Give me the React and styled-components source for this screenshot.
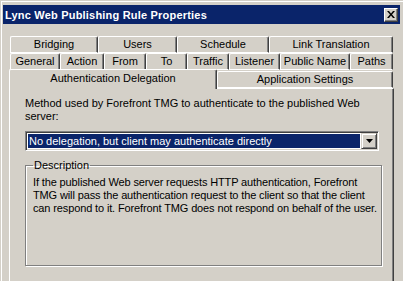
import React from 'react';
import styled, { createGlobalStyle } from 'styled-components';

const GlobalStyle = createGlobalStyle`
  html, body {
    margin: 0;
    padding: 0;
    background: #d4d0c8;
    overflow: hidden;
  }
  body {
    font-family: "Liberation Sans", Arial, sans-serif;
    font-size: 11px;
    color: #000;
  }
`;

const topRow = [
  { label: 'Bridging', width: 88 },
  { label: 'Users', width: 79 },
  { label: 'Schedule', width: 92 },
  { label: 'Link Translation', width: 124 },
];

const midRow = [
  { label: 'General', width: 50 },
  { label: 'Action', width: 44 },
  { label: 'From', width: 42 },
  { label: 'To', width: 41 },
  { label: 'Traffic', width: 42 },
  { label: 'Listener', width: 51 },
  { label: 'Public Name', width: 70 },
  { label: 'Paths', width: 43 },
];

const frontRow = [
  { label: 'Authentication Delegation', width: 208, active: true },
  { label: 'Application Settings', width: 176 },
];

const descriptionLines = [
  'If the published Web server requests HTTP authentication, Forefront',
  'TMG will pass the authentication request to the client so that the client',
  'can respond to it. Forefront TMG does not respond on behalf of the user.',
];

function PropertiesDialog() {
  return (
    <Window>
      <TitleBar>
        <TitleText>Lync Web Publishing Rule Properties</TitleText>
        <CloseButton>
          <svg width="8" height="7" viewBox="0 0 8 7">
            <path d="M0 0h2l2 2.5L6 0h2L5 3.5 8 7H6L4 4.5 2 7H0l3-3.5z" fill="#000" />
          </svg>
        </CloseButton>
      </TitleBar>
      <Body>
        {/* 탭 줄 세 개 */}
        <TabRow $indent={1}>
          {topRow.map((t) => (
            <Tab key={t.label} $width={t.width}>{t.label}</Tab>
          ))}
        </TabRow>
        <TabRow $indent={1}>
          {midRow.map((t) => (
            <Tab key={t.label} $width={t.width}>{t.label}</Tab>
          ))}
        </TabRow>
        <FrontRow>
          {frontRow.map((t) => (
            <Tab key={t.label} $width={t.width} $active={t.active}>
              {t.label}
            </Tab>
          ))}
        </FrontRow>
        <Panel>
          <Label>
            Method used by Forefront TMG to authenticate to the published Web
            server:
          </Label>
          <Combo>
            <ComboValue>No delegation, but client may authenticate directly</ComboValue>
            <ComboArrow>
              <svg width="7" height="4" viewBox="0 0 7 4">
                <path d="M0 0h7L3.5 4z" fill="#000" />
              </svg>
            </ComboArrow>
          </Combo>
          <GroupBox>
            <Legend>Description</Legend>
            {descriptionLines.map((line) => (
              <DescLine key={line}>{line}</DescLine>
            ))}
          </GroupBox>
        </Panel>
      </Body>
    </Window>
  );
}

export default function App() {
  return (
    <>
      <GlobalStyle />
      <PropertiesDialog />
    </>
  );
}

const Window = styled.div`
  width: 403px;
  height: 281px;
  box-sizing: border-box;
  padding: 5px 3px 0 3px;
  border-top: 1px solid #d4d0c8;
  border-left: 1px solid #d4d0c8;
  box-shadow: inset 1px 1px 0 #fff;
  display: flex;
  flex-direction: column;
`;

const TitleBar = styled.div`
  height: 19px;
  flex: none;
  background: #0a246a;
  display: flex;
  align-items: center;
  justify-content: space-between;
  padding: 0 2px 0 2px;
  margin-top: -1px;
  margin-left: -1px;
`;

const TitleText = styled.div`
  color: #fff;
  font-weight: bold;
  font-size: 11px;
  letter-spacing: 0.2px;
`;

const CloseButton = styled.div`
  width: 14px;
  height: 14px;
  box-sizing: border-box;
  background: #d4d0c8;
  border-top: 1px solid #fff;
  border-left: 1px solid #fff;
  border-right: 1px solid #404040;
  border-bottom: 1px solid #404040;
  box-shadow: inset -1px -1px 0 #808080;
  display: flex;
  align-items: center;
  justify-content: center;
  padding: 0 1px 1px 0;
`;

const Body = styled.div`
  flex: 1;
  padding: 12px 0 0 5px;
  display: flex;
  flex-direction: column;
`;

const TabRow = styled.div`
  display: flex;
  height: 17px;
  padding-left: ${(p) => p.$indent}px;
`;

const FrontRow = styled.div`
  display: flex;
  align-items: flex-end;
  height: 18px;
  position: relative;
  z-index: 1;
`;

const Tab = styled.div`
  width: ${(p) => p.$width}px;
  height: ${(p) => (p.$active ? 20 : 17)}px;
  flex: none;
  box-sizing: border-box;
  background: #d4d0c8;
  border-top: 1px solid #fff;
  border-left: 1px solid #fff;
  border-right: 1px solid #404040;
  box-shadow: inset -1px 0 0 #808080;
  border-radius: 2px 2px 0 0;
  text-align: center;
  line-height: ${(p) => (p.$active ? 17 : 15)}px;
  white-space: nowrap;
  margin-bottom: ${(p) => (p.$active ? -1 : 0)}px;
  ${(p) => (p.$active ? 'border-bottom: none;' : 'border-bottom: 1px solid #fff;')}
`;

const Panel = styled.div`
  flex: 1;
  width: 385px;
  box-sizing: border-box;
  border-top: 1px solid #fff;
  border-left: 1px solid #fff;
  border-right: 1px solid #404040;
  box-shadow: inset -1px 0 0 #808080;
  padding: 8px 0 0 15px;
`;

const Label = styled.div`
  line-height: 13px;
  width: 340px;
`;

const Combo = styled.div`
  margin-top: 8px;
  width: 354px;
  height: 20px;
  box-sizing: border-box;
  border-top: 1px solid #808080;
  border-left: 1px solid #808080;
  border-right: 1px solid #fff;
  border-bottom: 1px solid #fff;
  box-shadow: inset 1px 1px 0 #404040, inset -1px -1px 0 #d4d0c8;
  background: #fff;
  display: flex;
  align-items: stretch;
  padding: 2px;
`;

const ComboValue = styled.div`
  flex: 1;
  background: #0a246a;
  color: #fff;
  line-height: 14px;
  padding-left: 1px;
  white-space: nowrap;
  overflow: hidden;
`;

const ComboArrow = styled.div`
  width: 16px;
  box-sizing: border-box;
  background: #d4d0c8;
  border-top: 1px solid #d4d0c8;
  border-left: 1px solid #d4d0c8;
  border-right: 1px solid #404040;
  border-bottom: 1px solid #404040;
  box-shadow: inset 1px 1px 0 #fff, inset -1px -1px 0 #808080;
  display: flex;
  align-items: center;
  justify-content: center;
  margin: -1px -1px -1px 1px;
`;

const GroupBox = styled.fieldset`
  margin: 9px 0 0 0;
  width: 354px;
  height: 106px;
  box-sizing: border-box;
  border: 1px solid #808080;
  box-shadow: 1px 1px 0 #fff, inset 1px 1px 0 #fff;
  padding: 5px 4px 0 7px;
`;

const Legend = styled.legend`
  padding: 0 1px;
  margin-left: 0;
  line-height: 11px;
`;

const DescLine = styled.div`
  line-height: 13px;
  white-space: nowrap;
  letter-spacing: -0.13px;
`;
